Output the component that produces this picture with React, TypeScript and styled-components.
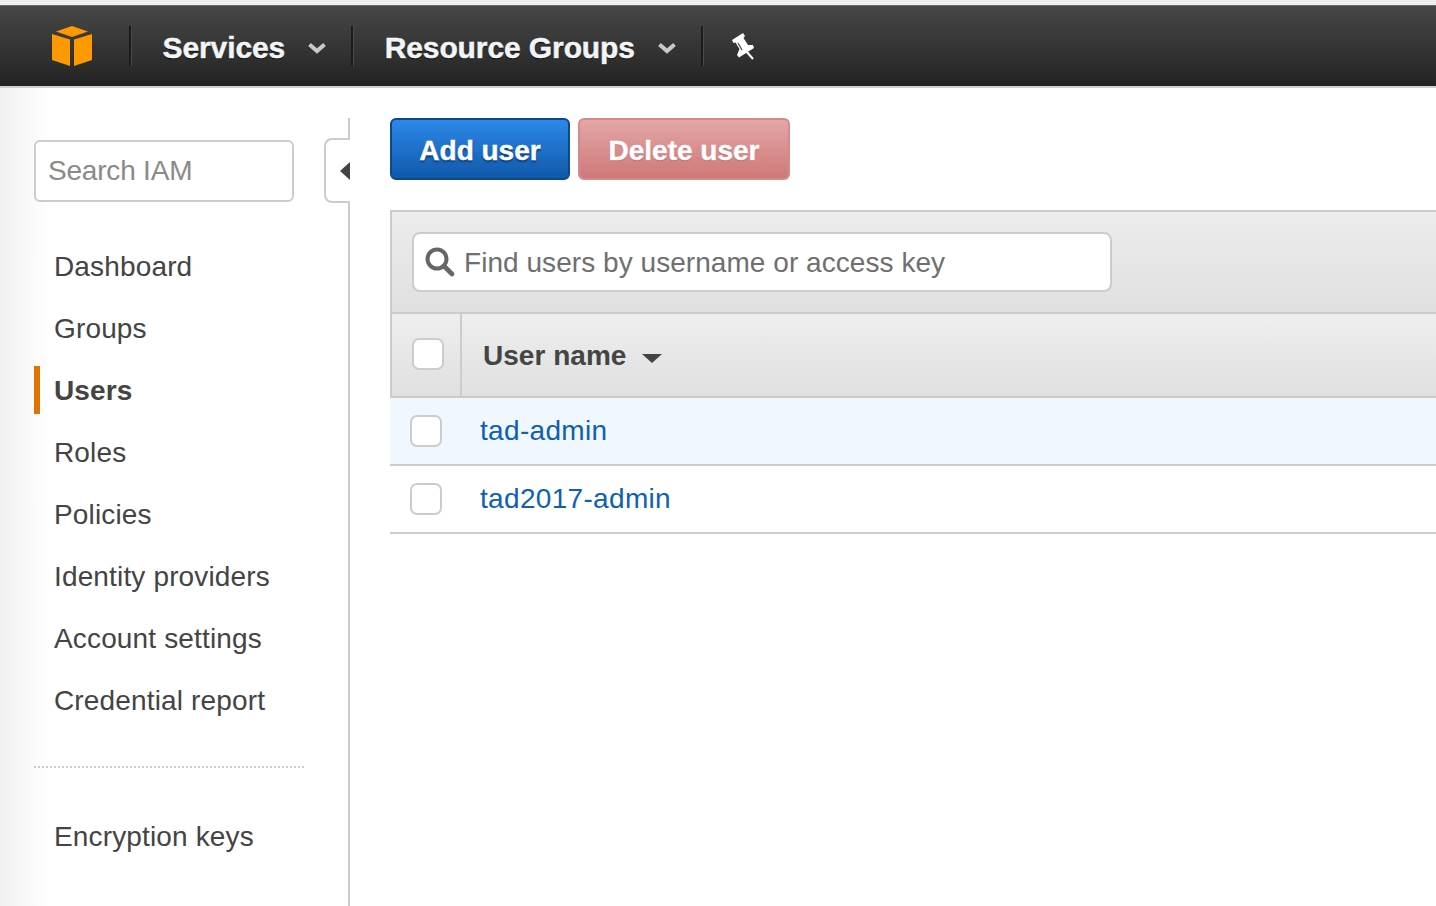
import React from 'react'
import styled, { createGlobalStyle } from 'styled-components'

const GlobalStyle = createGlobalStyle`
  html, body {
    margin: 0;
    height: 100%;
    background: #fff;
    overflow: hidden;
  }
  #root {
    height: 100%;
  }
  * {
    box-sizing: border-box;
  }
`

const Page = styled.div`
  display: flex;
  flex-direction: column;
  height: 100vh;
  font-family: 'Liberation Sans', Arial, sans-serif;
  font-size: 28px;
  color: #444;
`

const TopBar = styled.header`
  flex: 0 0 88px;
  display: flex;
  align-items: center;
  padding-left: 52px;
  border-top: 5px solid #eeeeee;
  border-bottom: 2px solid #d0d0d0;
  background: linear-gradient(to bottom, #6a6a6a 0, #6a6a6a 1px, #474747 1px, #232323 100%);
`

const BarDivider = styled.span`
  width: 2px;
  height: 40px;
  background: #1b1b1b;
  box-shadow: 1px 0 0 #4a4a4a;
`

const LogoSlot = styled.a`
  display: flex;
  width: 40px;
  height: 40px;
  margin-right: 37px;
`

const MenuButton = styled.button`
  display: flex;
  align-items: center;
  gap: 23px;
  padding: 4px 25px 0 31.5px;
  border: none;
  background: none;
  font-family: inherit;
  font-size: 30px;
  font-weight: 700;
  letter-spacing: -0.1px;
  color: #f2f4f6;
  text-shadow: 0 1px 1px #000;
  -webkit-text-stroke: 0.5px #f2f4f6;
`

const PinSlot = styled.span`
  display: flex;
  margin-left: 28px;
`

const Content = styled.div`
  flex: 1;
  display: flex;
  min-height: 0;
`

const Sidebar = styled.aside`
  flex: 0 0 350px;
  display: flex;
  padding-top: 30px;
  background: linear-gradient(to right, #f1f1f1 0, #ffffff 50px);
`

const SidebarBody = styled.div`
  position: relative;
  flex: 1;
  padding: 22px 0 0 34px;
  border-right: 2px solid #cccccc;
`

const CollapseTab = styled.button`
  position: absolute;
  top: 20px;
  right: -2px;
  display: flex;
  align-items: center;
  justify-content: flex-end;
  width: 26px;
  height: 65px;
  padding: 0;
  background: #fff;
  border: 2px solid #cccccc;
  border-right: none;
  border-radius: 8px 0 0 8px;
`

const LeftTriangle = styled.span`
  width: 0;
  height: 0;
  border-style: solid;
  border-width: 9px 10px 9px 0;
  border-color: transparent #444 transparent transparent;
`

const SearchInput = styled.input`
  display: block;
  width: 260px;
  height: 62px;
  margin-bottom: 40px;
  padding: 0 12px;
  background: #fff;
  border: 2px solid #cccccc;
  border-radius: 6px;
  font-family: inherit;
  font-size: 28px;
  letter-spacing: -0.2px;
  color: #444;

  &::placeholder {
    color: #8a8a8a;
    opacity: 1;
  }
`

const NavList = styled.nav`
  display: flex;
  flex-direction: column;
  gap: 14px;
`

const NavItem = styled.a<{ $active?: boolean }>`
  display: flex;
  align-items: center;
  height: 48px;
  padding: 2px 0 0 14px;
  border-left: 6px solid ${(props) => (props.$active ? '#dd7400' : 'transparent')};
  font-weight: ${(props) => (props.$active ? 700 : 400)};
  letter-spacing: 0.15px;
  color: #444;
`

const NavRule = styled.hr`
  width: 270px;
  height: 0;
  margin: 42px 0 44px;
  border: none;
  border-top: 2px dotted #cccccc;
`

const Main = styled.main`
  flex: 1;
  min-width: 0;
  padding: 30px 0 0 40px;
`

const Actions = styled.div`
  display: flex;
  gap: 8px;
  margin-bottom: 30px;
`

const ActionButton = styled.button<{ $danger?: boolean }>`
  width: ${(props) => (props.$danger ? '212px' : '180px')};
  height: 62px;
  padding: 4px 0 0;
  border: 2px solid ${(props) => (props.$danger ? '#d88a8a' : '#0b4a87')};
  border-radius: 6px;
  background: ${(props) =>
    props.$danger
      ? 'linear-gradient(to bottom, #e3a6a6, #cf7878)'
      : 'linear-gradient(to bottom, #2d88e8, #1059ab)'};
  font-family: inherit;
  font-size: 28px;
  font-weight: 700;
  color: #fff;
  -webkit-text-stroke: 0.4px #fff;
  text-shadow: ${(props) => (props.$danger ? '0 1px 1px rgba(150, 70, 70, 0.5)' : '0 2px 2px #0a3a6e')};
`

const FilterPanel = styled.div`
  height: 104px;
  padding: 20px 0 0 20px;
  border-top: 2px solid #cccccc;
  border-left: 2px solid #cccccc;
  border-bottom: 2px solid #cccccc;
  background: linear-gradient(to bottom, #ececec, #e0e0e0);
`

const FilterBox = styled.label`
  display: flex;
  align-items: center;
  gap: 9px;
  width: 700px;
  height: 60px;
  padding-left: 11px;
  background: #fff;
  border: 2px solid #cccccc;
  border-radius: 8px;
`

const FilterInput = styled.input`
  flex: 1;
  min-width: 0;
  padding: 2px 0 0;
  border: none;
  outline: none;
  background: none;
  font-family: inherit;
  font-size: 28px;
  letter-spacing: 0.05px;
  color: #444;

  &::placeholder {
    color: #6f6f6f;
    opacity: 1;
  }
`

const TableHead = styled.div`
  display: flex;
  height: 84px;
  border-left: 2px solid #cccccc;
  border-bottom: 2px solid #cccccc;
  background: linear-gradient(to bottom, #eeeeee, #e0e0e0);
`

const HeadCheckCell = styled.div`
  flex: 0 0 70px;
  padding: 24px 0 0 20px;
  border-right: 2px solid #cccccc;
`

const HeadNameCell = styled.div`
  display: flex;
  align-items: center;
  gap: 16px;
  padding: 2px 0 0 21px;
  font-weight: 700;
  letter-spacing: 0.03px;
`

const SortCaret = styled.span`
  width: 0;
  height: 0;
  margin-top: 4px;
  border-style: solid;
  border-width: 9px 10px 0 10px;
  border-color: #444 transparent transparent transparent;
`

const Row = styled.div<{ $selected?: boolean }>`
  display: flex;
  align-items: center;
  height: 68px;
  padding-left: 20px;
  border-bottom: 2px solid #cccccc;
  background: ${(props) => (props.$selected ? '#f0f7fe' : '#fff')};
`

const Check = styled.span`
  display: block;
  flex: 0 0 32px;
  width: 32px;
  height: 32px;
  background: #fff;
  border: 2px solid #cccccc;
  border-radius: 7px;
`

const UserLink = styled.a`
  margin-left: 38px;
  letter-spacing: 0.32px;
  color: #0f5fb4;
`

const AwsCube = () => (
  <svg width='40' height='40' viewBox='0 0 40 40'>
    <polygon points='4,5.5 20,0 36,5.5 20,11' fill='#ff9900' />
    <polygon points='0,8 18,13.5 18,40 0,34' fill='#ff9900' />
    <polygon points='40,8 22,13.5 22,40 40,34' fill='#ff9900' />
  </svg>
)

const Chevron = () => (
  <svg width='18' height='12' viewBox='0 0 18 12'>
    <path d='M1.5 2.5 L9 9 L16.5 2.5' fill='none' stroke='#c9c9c9' strokeWidth='4' />
  </svg>
)

const Pin = () => (
  <svg width='26' height='28' viewBox='0 0 26 28'>
    <path
      d='M1 8 L12 1 L14 4 L12.5 6 L17 13 L22 13 L23 16 L8 25.5 L6 23 L8.5 17 L4.5 10.5 L2.5 11 Z'
      fill='#fff'
    />
    <path d='M15 19 L22 27' stroke='#fff' strokeWidth='2' />
    <path d='M7 11 L11 18' stroke='#555' strokeWidth='1.4' />
  </svg>
)

const SearchGlass = () => (
  <svg width='30' height='30' viewBox='0 0 30 30'>
    <circle cx='12' cy='12' r='9.5' fill='none' stroke='#666' strokeWidth='4' />
    <path d='M19 19 L27 27' stroke='#666' strokeWidth='4.6' strokeLinecap='round' />
  </svg>
)

const navItems = ['Dashboard', 'Groups', 'Users', 'Roles', 'Policies', 'Identity providers', 'Account settings', 'Credential report']

const App = () => (
  <Page>
    <GlobalStyle />
    <TopBar>
      <LogoSlot>
        <AwsCube />
      </LogoSlot>
      <BarDivider />
      <MenuButton>
        Services
        <Chevron />
      </MenuButton>
      <BarDivider />
      <MenuButton>
        Resource Groups
        <Chevron />
      </MenuButton>
      <BarDivider />
      <PinSlot>
        <Pin />
      </PinSlot>
    </TopBar>
    <Content>
      <Sidebar>
        <SidebarBody>
          <CollapseTab>
            <LeftTriangle />
          </CollapseTab>
          <SearchInput placeholder='Search IAM' />
          <NavList>
            {navItems.map((item) => (
              <NavItem key={item} $active={item === 'Users'}>
                {item}
              </NavItem>
            ))}
          </NavList>
          <NavRule />
          <NavItem>Encryption keys</NavItem>
        </SidebarBody>
      </Sidebar>
      <Main>
        <Actions>
          <ActionButton>Add user</ActionButton>
          <ActionButton $danger>Delete user</ActionButton>
        </Actions>
        <FilterPanel>
          <FilterBox>
            <SearchGlass />
            <FilterInput placeholder='Find users by username or access key' />
          </FilterBox>
        </FilterPanel>
        <TableHead>
          <HeadCheckCell>
            <Check />
          </HeadCheckCell>
          <HeadNameCell>
            User name
            <SortCaret />
          </HeadNameCell>
        </TableHead>
        <Row $selected>
          <Check />
          <UserLink>tad-admin</UserLink>
        </Row>
        <Row>
          <Check />
          <UserLink>tad2017-admin</UserLink>
        </Row>
      </Main>
    </Content>
  </Page>
)

export default App
